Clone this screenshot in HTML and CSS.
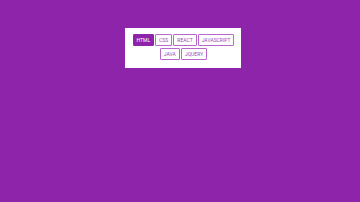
FILE: index.html
```html
<!DOCTYPE html>
<html>
<head>
<meta charset="utf-8">
<link rel="stylesheet" href="styles.css">
</head>
<body>
<div class="page">
  <div class="card">
    <div class="row">
      <button class="tag active">HTML</button>
      <button class="tag">CSS</button>
      <button class="tag">REACT</button>
      <button class="tag">JAVASCRIPT</button>
    </div>
    <div class="row">
      <button class="tag">JAVA</button>
      <button class="tag">JQUERY</button>
    </div>
  </div>
</div>
</body>
</html>
```
FILE: styles.css
```css
html, body {
  margin: 0;
  padding: 0;
  background: #8e24aa;
  width: 360px;
  height: 202px;
  overflow: hidden;
}
.page {
  padding-top: 28px;
  padding-left: 125px;
}
.card {
  width: 116px;
  height: 40px;
  box-sizing: border-box;
  background: #ffffff;
  padding: 6px 7px 0 8px;
  display: flex;
  flex-direction: column;
  gap: 2px;
}
.row {
  display: flex;
  justify-content: center;
  gap: 1px;
}
.tag {
  font-family: Roboto, "Liberation Sans", sans-serif;
  font-size: 5px;
  height: 12px;
  padding: 0 3px;
  margin: 0;
  border: 1px solid #b868c8;
  background: #ffffff;
  color: #9c4ab4;
  border-radius: 1px;
  line-height: 10px;
}
.tag.active {
  background: #8e24aa;
  border-color: #8e24aa;
  color: #ffffff;
}
```
